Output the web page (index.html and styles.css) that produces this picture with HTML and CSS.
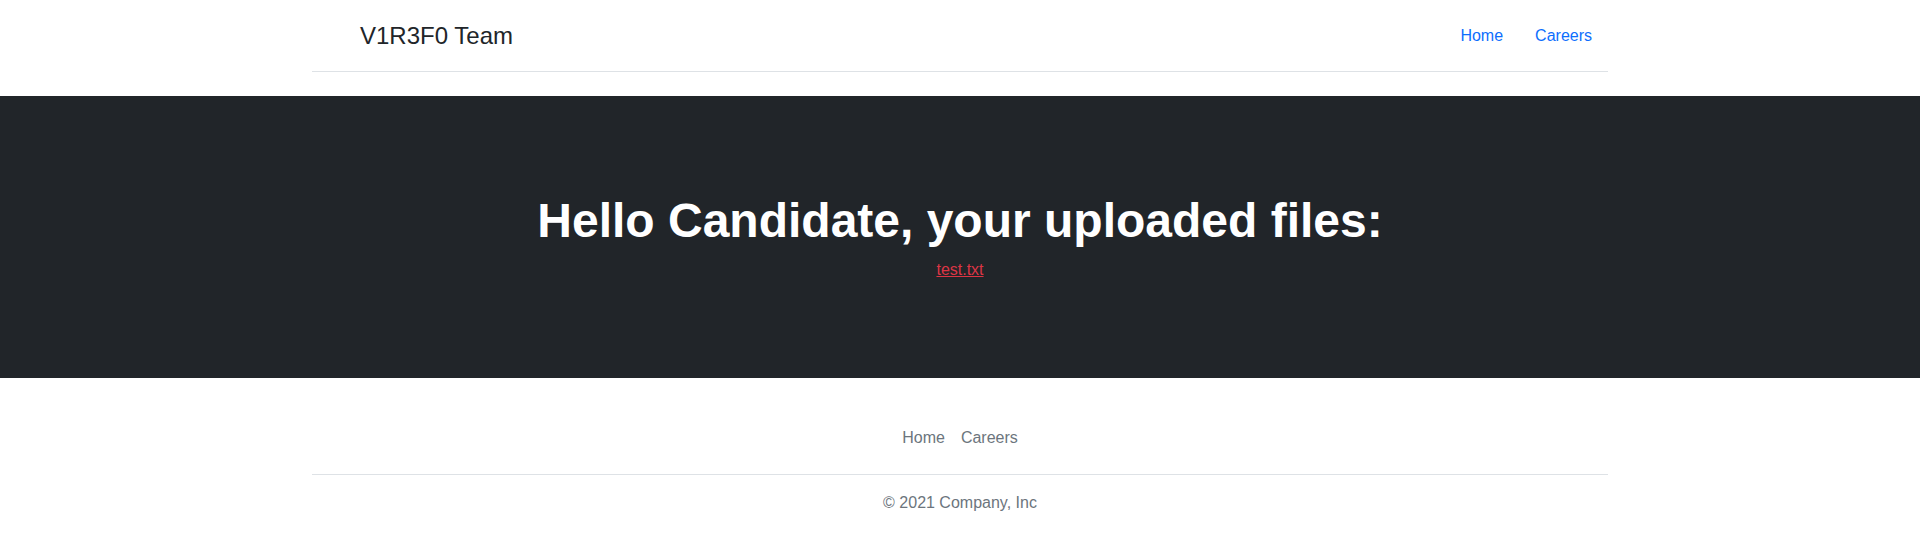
FILE: index.html
```html
<!DOCTYPE html>
<html lang="en">
<head>
<meta charset="utf-8">
<title>V1R3F0 Team</title>
<link rel="stylesheet" href="styles.css">
</head>
<body>
<div class="container">
  <header class="site-header">
    <a href="#" class="brand">
      <span class="brand-spacer"></span>
      <span class="brand-text">V1R3F0 Team</span>
    </a>
    <ul class="nav">
      <li><a href="#" class="nav-link">Home</a></li>
      <li><a href="#" class="nav-link">Careers</a></li>
    </ul>
  </header>
</div>

<section class="hero">
  <div class="hero-inner">
    <h1 class="hero-title">Hello Candidate, your uploaded files:</h1>
    <div class="files"><a href="#" class="file-link">test.txt</a></div>
  </div>
</section>

<div class="container">
  <footer class="site-footer">
    <ul class="footer-nav">
      <li><a href="#" class="footer-link">Home</a></li>
      <li><a href="#" class="footer-link">Careers</a></li>
    </ul>
    <p class="copyright">© 2021 Company, Inc</p>
  </footer>
</div>
</body>
</html>
```
FILE: styles.css
```css
*, *::before, *::after { box-sizing: border-box; }
html, body { margin: 0; padding: 0; }
body {
  font-family: "Liberation Sans", Arial, sans-serif;
  font-size: 16px;
  line-height: 1.5;
  color: #212529;
  background: #fff;
}
.container {
  width: 1320px;
  margin: 0 auto;
  padding: 0 12px;
}
.site-header {
  display: flex;
  align-items: center;
  justify-content: space-between;
  padding: 16px 0 15px;
  margin-bottom: 24px;
  border-bottom: 1px solid #dee2e6;
}
.brand {
  display: flex;
  align-items: center;
  color: #212529;
  text-decoration: none;
}
.brand-spacer {
  display: inline-block;
  width: 40px;
  height: 32px;
  margin-right: 8px;
}
.brand-text { font-size: 24px; line-height: 1.5; }
.nav, .footer-nav {
  display: flex;
  list-style: none;
  margin: 0;
  padding: 0;
}
.nav-link {
  display: block;
  padding: 8px 16px;
  color: #0d6efd;
  text-decoration: none;
}
.hero {
  background: #212529;
  padding: 0 24px;
  text-align: center;
}
.hero-inner { padding: 96px 0; }
.hero-title {
  margin: 0 0 8px;
  font-size: 48px;
  font-weight: 700;
  line-height: 1.2;
  color: #fff;
}
.files { color: #6c757d; }
.file-link { color: #dc3545; text-decoration: underline; }
.site-footer { padding: 16px 0; margin: 24px 0; }
.footer-nav {
  justify-content: center;
  padding-bottom: 16px;
  margin-bottom: 16px;
  border-bottom: 1px solid #dee2e6;
}
.footer-link {
  display: block;
  padding: 8px 8px;
  color: #6c757d;
  text-decoration: none;
}
.copyright {
  margin: 0 0 16px;
  text-align: center;
  color: #6c757d;
}
```
